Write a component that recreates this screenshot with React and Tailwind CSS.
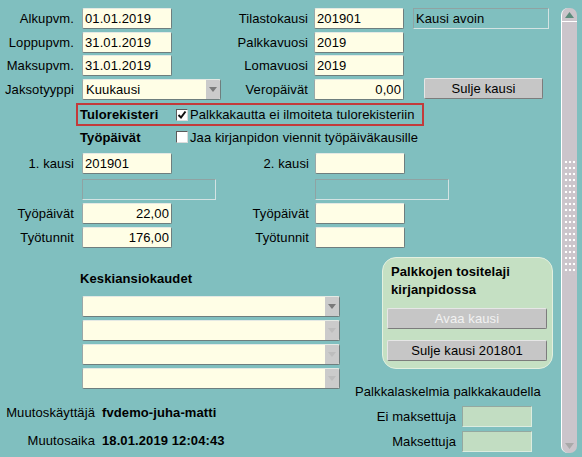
import React from "react";

const Field = ({ w, right, children }) => (
  <div
    className={`${w} h-[21px] shrink-0 bg-[#fffee6] border border-t-[#e4e9e4] border-l-[#9aa8a8] border-r-[#6e7e7e] border-b-[#6e7e7e] rounded-[2px] flex items-center px-[2px] leading-none ${right ? "justify-end" : "justify-start"}`}
  >
    {children}
  </div>
);

const Inset = ({ w, children }) => (
  <div className={`${w} h-[21px] shrink-0 border border-t-[#8fa3a3] border-l-[#8fa3a3] border-r-[#d3e3e3] border-b-[#d3e3e3] flex items-center px-[2px] leading-none`}>
    {children}
  </div>
);

const Label = ({ w, pr, children }) => (
  <div className={`${w} ${pr || "pr-[6px]"} shrink-0 text-right leading-none`}>{children}</div>
);

const Button = ({ w, disabled, children }) => (
  <div
    className={`${w} h-[21px] shrink-0 bg-[#c6c6c6] border border-t-[#e6e6e6] border-l-[#e6e6e6] border-r-[#7c7c7c] border-b-[#7c7c7c] rounded-[2px] flex items-center justify-center leading-none ${disabled ? "text-[#f2f2f2]" : "text-black"}`}
  >
    {children}
  </div>
);

const Arrow = ({ dark }) => (
  <div className="w-[14px] h-full bg-[#cbcbcb] flex items-center justify-center">
    <svg width="8" height="5" viewBox="0 0 8 5">
      <polygon points="0,0 8,0 4,5" fill={dark ? "#7a7a7a" : "#bdbdbd"} />
    </svg>
  </div>
);

const Select = ({ w, dark, children }) => (
  <div className={`${w} h-[21px] shrink-0 bg-[#fffee6] border border-t-[#e4e9e4] border-l-[#9aa8a8] border-r-[#6e7e7e] border-b-[#6e7e7e] rounded-[2px] flex items-center leading-none overflow-hidden`}>
    <div className="flex-1 pl-[3px]">{children}</div>
    <Arrow dark={dark} />
  </div>
);

const Check = ({ checked }) => (
  <div className="w-[12px] h-[12px] shrink-0 bg-white border border-t-[#5a5a5a] border-l-[#5a5a5a] border-r-[#dcdcdc] border-b-[#dcdcdc] flex items-center justify-center">
    {checked && (
      <svg width="10" height="10" viewBox="0 0 10 10">
        <path d="M1.5 5 L4 7.5 L8.5 1.5" stroke="#111" strokeWidth="2" fill="none" />
      </svg>
    )}
  </div>
);

export default function App() {
  return (
    <div className="w-[582px] h-[457px] bg-[#80bfbf] flex font-['Liberation_Sans',Arial,sans-serif] text-[13px] tracking-[0.1px] text-black overflow-hidden">
      <div className="w-[561px] shrink-0 flex flex-col">
        {/* Row 1 */}
        <div className="flex items-center mt-[8px]">
          <Label w="w-[82px]" pr="pr-[8px]">Alkupvm.</Label>
          <Field w="w-[90px]">01.01.2019</Field>
          <Label w="w-[142px]">Tilastokausi</Label>
          <Field w="w-[90px]">201901</Field>
          <div className="ml-[9px]">
            <Inset w="w-[136px]">Kausi avoin</Inset>
          </div>
        </div>
        {/* Row 2 */}
        <div className="flex items-center mt-[3px]">
          <Label w="w-[82px]" pr="pr-[8px]">Loppupvm.</Label>
          <Field w="w-[90px]">31.01.2019</Field>
          <Label w="w-[142px]">Palkkavuosi</Label>
          <Field w="w-[90px]">2019</Field>
        </div>
        {/* Row 3 */}
        <div className="flex items-center mt-[2px]">
          <Label w="w-[82px]" pr="pr-[8px]">Maksupvm.</Label>
          <Field w="w-[90px]">31.01.2019</Field>
          <Label w="w-[142px]">Lomavuosi</Label>
          <Field w="w-[90px]">2019</Field>
        </div>
        {/* Row 4 */}
        <div className="flex items-center mt-[3px]">
          <Label w="w-[82px]" pr="pr-[8px]">Jaksotyyppi</Label>
          <Select w="w-[139px]" dark>Kuukausi</Select>
          <Label w="w-[93px]">Veropäivät</Label>
          <Field w="w-[90px]" right>0,00</Field>
          <div className="ml-[20px] -mt-[3px]">
            <Button w="w-[119px]">Sulje kausi</Button>
          </div>
        </div>
        {/* Red box */}
        <div className="ml-[76px] mt-[3px] w-[348px] h-[23px] border-2 border-[#c33a3a] flex items-center leading-none">
          <div className="w-[98px] pl-[2px] font-bold">Tulorekisteri</div>
          <Check checked />
          <div className="pl-[2px]">Palkkakautta ei ilmoiteta tulorekisteriin</div>
        </div>
        {/* Työpäivät */}
        <div className="ml-[80px] mt-[2px] h-[18px] flex items-center leading-none">
          <div className="w-[96px] font-bold">Työpäivät</div>
          <Check />
          <div className="pl-[2px]">Jaa kirjanpidon viennit työpäiväkausille</div>
        </div>
        {/* 1. kausi */}
        <div className="flex items-center mt-[7px]">
          <Label w="w-[82px]" pr="pr-[8px]">1. kausi</Label>
          <Field w="w-[90px]">201901</Field>
          <Label w="w-[143px]">2. kausi</Label>
          <Field w="w-[90px]"></Field>
        </div>
        <div className="flex items-center mt-[5px]">
          <div className="w-[82px] shrink-0" />
          <Inset w="w-[134px]" />
          <div className="w-[99px] shrink-0" />
          <Inset w="w-[134px]" />
        </div>
        <div className="flex items-center mt-[3px]">
          <Label w="w-[82px]" pr="pr-[8px]">Työpäivät</Label>
          <Field w="w-[90px]" right>22,00</Field>
          <Label w="w-[143px]">Työpäivät</Label>
          <Field w="w-[90px]"></Field>
        </div>
        <div className="flex items-center mt-[3px]">
          <Label w="w-[82px]" pr="pr-[8px]">Työtunnit</Label>
          <Field w="w-[90px]" right>176,00</Field>
          <Label w="w-[143px]">Työtunnit</Label>
          <Field w="w-[90px]"></Field>
        </div>

        {/* Lower section */}
        <div className="flex">
          <div className="w-[350px] shrink-0 flex flex-col">
            <div className="ml-[80px] mt-[23px] h-[16px] leading-[16px] font-bold">Keskiansiokaudet</div>
            <div className="ml-[82px] mt-[9px] flex flex-col gap-[3px]">
              <Select w="w-[258px]" dark />
              <Select w="w-[258px]" />
              <Select w="w-[258px]" />
              <Select w="w-[258px]" />
            </div>
            <div className="flex items-center mt-[15px] h-[16px] leading-none">
              <div className="w-[102px] shrink-0 text-right pr-[7px]">Muutoskäyttäjä</div>
              <div className="font-bold">fvdemo-juha-matti</div>
            </div>
            <div className="flex items-center mt-[12px] h-[16px] leading-none">
              <div className="w-[102px] shrink-0 text-right pr-[7px]">Muutosaika</div>
              <div className="font-bold">18.01.2019 12:04:43</div>
            </div>
          </div>
          <div className="flex-1 flex flex-col">
            <div className="ml-[32px] mt-[9px] w-[171px] h-[112px] bg-[#c5e0c3] border border-[#e3f0e0] rounded-[14px] flex flex-col pt-[5px] px-[4px]">
              <div className="pl-[4px] font-bold leading-[18px]">
                Palkkojen tositelaji
                <br />
                kirjanpidossa
              </div>
              <div className="mt-[9px]">
                <Button w="w-[160px]" disabled>Avaa kausi</Button>
              </div>
              <div className="mt-[11px]">
                <Button w="w-[160px]">Sulje kausi 201801</Button>
              </div>
            </div>
            <div className="ml-[5px] mt-[15px] h-[16px] leading-[16px]">Palkkalaskelmia palkkakaudella</div>
            <div className="flex items-center mt-[6px]">
              <div className="w-[112px] shrink-0 text-right pr-[6px] leading-none">Ei maksettuja</div>
              <div className="w-[70px] h-[21px] bg-[#c2ddc2] border border-t-[#94a8a0] border-l-[#94a8a0] border-r-[#dcece0] border-b-[#dcece0]" />
            </div>
            <div className="flex items-center mt-[4px]">
              <div className="w-[112px] shrink-0 text-right pr-[6px] leading-none">Maksettuja</div>
              <div className="w-[70px] h-[21px] bg-[#c2ddc2] border border-t-[#94a8a0] border-l-[#94a8a0] border-r-[#dcece0] border-b-[#dcece0]" />
            </div>
          </div>
        </div>
      </div>

      {/* Scrollbar */}
      <div className="w-[16px] shrink-0 mt-[8px] h-[445px] bg-[#cbc5cb] border-l border-white rounded-t-[7px] rounded-b-[7px] flex flex-col">
        <div className="h-[14px] border-b border-white flex items-center justify-center">
          <svg width="9" height="6" viewBox="0 0 9 6">
            <polygon points="0,6 9,6 4.5,0" fill="#5d8c7c" />
          </svg>
        </div>
        <div className="mt-[137px] h-[116px] mx-[2px] bg-[radial-gradient(circle,#ffffff_1px,transparent_1.6px)] bg-[length:4px_6px]" />
        <div className="flex-1" />
        <div className="h-[14px] flex items-center justify-center">
          <svg width="9" height="6" viewBox="0 0 9 6">
            <polygon points="0,0 9,0 4.5,6" fill="#a9a9a9" />
          </svg>
        </div>
      </div>
    </div>
  );
}
